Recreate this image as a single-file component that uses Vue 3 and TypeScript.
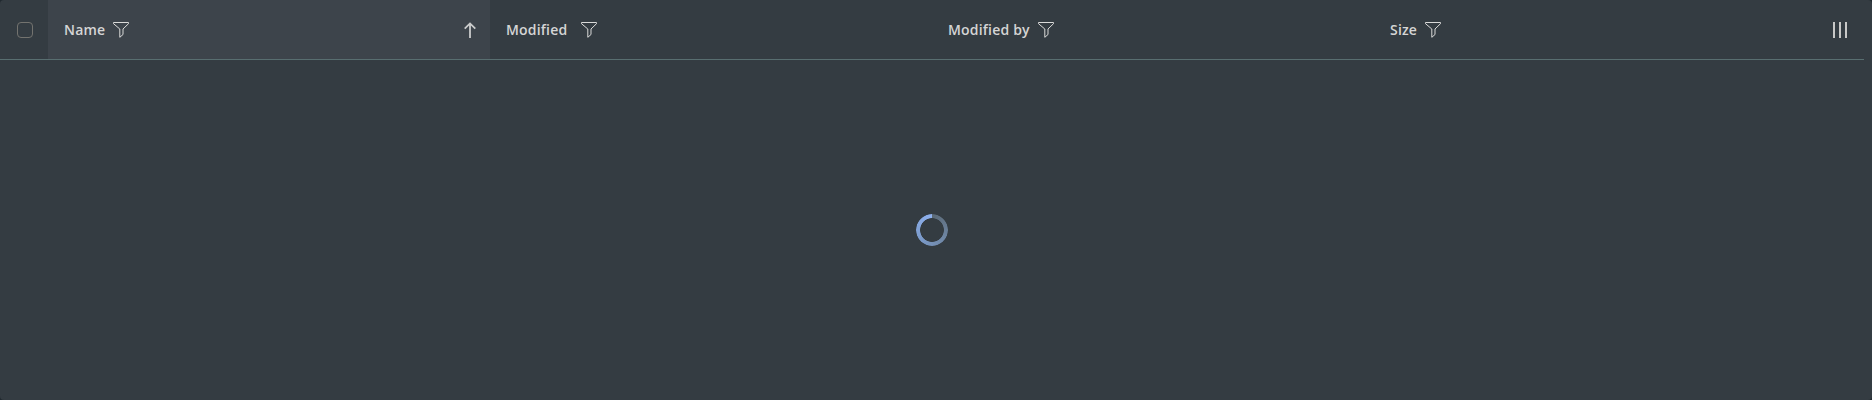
<script setup lang="ts">
interface Column {
  label: string
  sorted?: boolean
  wideGap?: boolean
}

const columns: Column[] = [
  { label: 'Name', sorted: true },
  { label: 'Modified', wideGap: true },
  { label: 'Modified by' },
  { label: 'Size' },
]
</script>

<template>
  <div class="table" role="table">
    <div class="header" role="row">
      <div class="select"><span class="checkbox" role="checkbox" aria-checked="false"></span></div>
      <div v-for="col in columns" :key="col.label" class="column" :class="{ sorted: col.sorted }" role="columnheader">
        <span class="label">{{ col.label }}</span>
        <svg class="filter" :class="{ spaced: col.wideGap }" viewBox="0 0 16 16" width="16" height="16">
          <path d="M.5.5h15v1.2L10 7v5.5l-3.2 2.8V7L.5 1.7z" />
        </svg>
        <svg v-if="col.sorted" class="arrow" viewBox="0 0 16 16" width="16" height="16">
          <path d="M8 16V1.5M2.7 6.7 8 1.4l5.3 5.3" />
        </svg>
      </div>
      <div class="manager">
        <svg viewBox="0 0 16 16" width="16" height="16"><path d="M1 0h2v16H1zM7 0h2v16H7zM13 0h2v16h-2z" /></svg>
      </div>
    </div>
    <div class="body"><div class="spinner" role="progressbar"></div></div>
  </div>
</template>

<style>
body {
  background: #20292f;
}
</style>

<style scoped>
.table {
  box-sizing: border-box;
  height: 400px;
  padding-right: 8px;
  display: flex;
  flex-direction: column;
  background: #343c42;
  border-radius: 4px;
  font-family: "Open Sans", sans-serif;
  color: #d5d5d5;
}
.header {
  box-sizing: border-box;
  height: 60px;
  display: grid;
  grid-template-columns: 48px repeat(4, 442px) 48px;
  border-bottom: 1px solid #586e70;
}
.select {
  display: flex;
  align-items: center;
  padding: 1px 0 0 17px;
}
.checkbox {
  box-sizing: border-box;
  width: 16px;
  height: 16px;
  border: 1px solid #73736f;
  border-radius: 4px;
}
.column {
  display: flex;
  align-items: center;
  padding: 1px 12px 0 16px;
}
.sorted {
  background: #3d444b;
}
.label {
  font-size: 14px;
  font-weight: 600;
  line-height: 20px;
  letter-spacing: 0.19px;
  white-space: nowrap;
}
.filter {
  margin-left: 8px;
  fill: none;
  stroke: #dadad9;
  stroke-width: 1;
}
.spaced {
  margin-left: 13.5px;
}
.arrow {
  margin-left: auto;
  fill: none;
  stroke: #cbcccc;
  stroke-width: 1.8;
}
.manager {
  display: flex;
  align-items: center;
  justify-content: center;
  padding-top: 1px;
  fill: #c8c8c7;
}
.body {
  flex: 1;
  display: grid;
  place-items: center;
}
.spinner {
  width: 32px;
  height: 32px;
  border-radius: 50%;
  background: conic-gradient(#5b6975, #6f87a5 35%, #7b9bcb 65%, #8fb2f0);
  mask: radial-gradient(circle, transparent 11.5px, #000 12.2px);
}
</style>
